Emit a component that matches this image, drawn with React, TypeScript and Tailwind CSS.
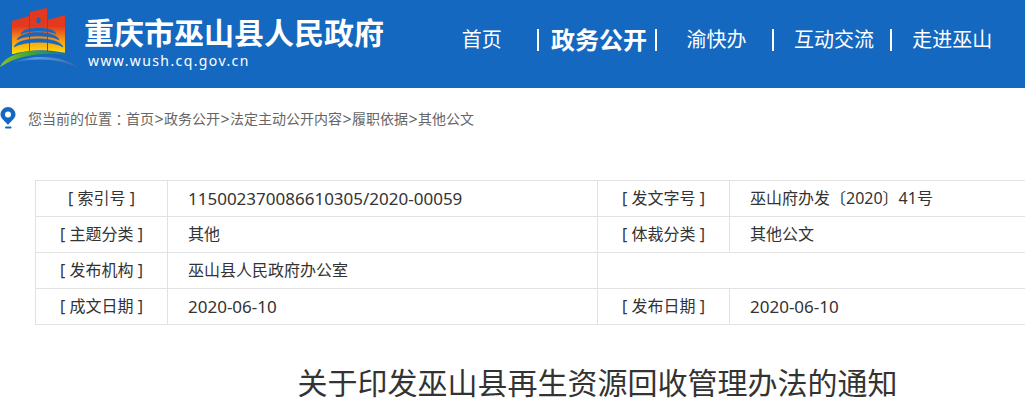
import React from 'react'

type NavItem = {
    label: string;
    active?: boolean;
}

const navItems: NavItem[] = [
    { label: '首页' },
    { label: '政务公开', active: true },
    { label: '渝快办' },
    { label: '互动交流' },
    { label: '走进巫山' },
]

const crumbs = ['首页', '政务公开', '法定主动公开内容', '履职依据', '其他公文']

// each row holds up to two label / value pairs
const rows: [string, string][][] = [
    [['索引号', '115002370086610305/2020-00059'], ['发文字号', '巫山府办发〔2020〕41号']],
    [['主题分类', '其他'], ['体裁分类', '其他公文']],
    [['发布机构', '巫山县人民政府办公室']],
    [['成文日期', '2020-06-10'], ['发布日期', '2020-06-10']],
]

// codes and dates are set slightly larger than the Chinese text
const isNumeric = (value: string) => /^[\d/-]+$/.test(value)

const Logo = () => (
    <svg className="w-20 h-[88px] shrink-0" viewBox="0 0 80 88" aria-hidden="true">
        <defs>
            <linearGradient id="tower" x1="0" y1="8" x2="0" y2="54" gradientUnits="userSpaceOnUse">
                <stop offset="0" stopColor="#e2371f" />
                <stop offset="0.4" stopColor="#e33a1e" />
                <stop offset="0.7" stopColor="#f59a1b" />
                <stop offset="1" stopColor="#ffe100" />
            </linearGradient>
            <linearGradient id="hill" x1="0" y1="0" x2="1" y2="0">
                <stop offset="0" stopColor="#8cc21f" />
                <stop offset="0.45" stopColor="#3fa535" />
                <stop offset="1" stopColor="#1d7a8c" />
            </linearGradient>
            <linearGradient id="river" x1="0" y1="0" x2="1" y2="0">
                <stop offset="0" stopColor="#1568c0" />
                <stop offset="0.35" stopColor="#5a9fdc" />
                <stop offset="1" stopColor="#3d66a8" />
            </linearGradient>
        </defs>
        <path fill="url(#tower)" d="M12 21 29 16V54H12ZM30 12 47 8V54H30ZM48 20 65 15V54H48Z" />
        <ellipse cx="38.5" cy="20.5" rx="2.2" ry="3" fill="#1568c0" />
        <path d="M29.500 14V54M47.500 14V54" stroke="#1568c0" strokeWidth="1" />
        <g fill="#1568c0" stroke="#1568c0" strokeWidth="0.6" strokeLinejoin="round">
            <path d="M21 34C23 26 54 26 56 34C50 30 27 30 21 34Z" />
            <path d="M17 40C20 30 56 30 59 40C51 34.500 25 34.500 17 40Z" />
            <path d="M14 47C18 36 59 36 63 47C54 40.500 24 40.500 14 47Z" />
        </g>
        <path fill="#1568c0" d="M10 55C30 49 50 49 68 54V57H10Z" />
        <path fill="url(#hill)" d="M0 67C4 57 20 51 36 51C49 51 59 52 66 55C46 52 20 54 0 67Z" />
        <path fill="url(#river)" d="M12 63C34 53 66 56 78 68C62 59 36 57 12 63Z" />
    </svg>
)

const PinIcon = () => (
    <svg className="w-4 h-6 shrink-0" viewBox="0 0 16 24" aria-hidden="true">
        <path fill="#1568c0" fillRule="evenodd" d="M8 0a7.500 7.500 0 0 1 7.500 7.500c0 4-4.500 6.500-7.500 10.500C5 14 .5 11.500.5 7.500A7.500 7.500 0 0 1 8 0Zm0 4.500a3 3 0 1 0 0 6 3 3 0 0 0 0-6Z" />
        <path d="M6 20.500h4.500" stroke="#1568c0" strokeWidth="2" strokeLinecap="round" />
    </svg>
)

const Header = () => (
    <header className="flex items-center h-[88px] pr-4 text-white bg-[#1568c0]">
        <a href="#" className="flex items-center shrink-0">
            <Logo />
            <div className="pb-0.5 pl-1 w-[342px]">
                <div className="text-[30px] leading-[36px] font-bold">重庆市巫山县人民政府</div>
                <div className="pl-1 text-sm leading-5 tracking-widest">www.wush.cq.gov.cn</div>
            </div>
        </a>
        <nav className="flex-1 pb-2">
            <ul className="flex">
                {navItems.map(({ label, active }, index) => (
                    <li key={label} className="flex items-center flex-1 h-9">
                        <a
                            href="#"
                            className={active
                                ? "flex-1 pl-1 text-2xl font-bold text-center whitespace-nowrap"
                                : "flex-1 pl-1 text-xl text-center whitespace-nowrap"}
                        >
                            {label}
                        </a>
                        {index < navItems.length - 1 && <span className="w-[2px] h-[22px] bg-white" />}
                    </li>
                ))}
            </ul>
        </nav>
    </header>
)

const Breadcrumb = () => (
    <nav className="flex items-center h-[62px] text-sm text-[#666]">
        <PinIcon />
        <p className="flex items-center pl-3">
            <span>您当前的位置</span>
            <span className="font-['Noto_Sans_CJK_TC',sans-serif]">：</span>
            {crumbs.map((crumb, index) => (
                <React.Fragment key={crumb}>
                    {index > 0 && <span className="w-[10px] text-base leading-5 text-center">&gt;</span>}
                    <a href="#">{crumb}</a>
                </React.Fragment>
            ))}
        </p>
    </nav>
)

const InfoTable = () => (
    <table className="w-full text-base leading-[35px] text-[#333] border-collapse table-fixed">
        <colgroup>
            <col className="w-[132px]" />
            <col />
            <col className="w-[132px]" />
            <col />
        </colgroup>
        <tbody>
            {rows.map((pairs) => (
                <tr key={pairs[0][0]}>
                    {pairs.map(([label, value]) => (
                        <React.Fragment key={label}>
                            <th scope="row" className="font-normal text-center border border-[#e2e2e2]">[ {label} ]</th>
                            <td
                                className={isNumeric(value)
                                    ? "pl-5 text-[17px] leading-[35px] border border-[#e2e2e2]"
                                    : "pl-5 border border-[#e2e2e2]"}
                            >
                                {value}
                            </td>
                        </React.Fragment>
                    ))}
                    {pairs.length === 1 && <td colSpan={2} className="border border-[#e2e2e2]" />}
                </tr>
            ))}
        </tbody>
    </table>
)

const App = () => {
    return (
        <div className="overflow-hidden bg-white font-['Noto_Sans','Noto_Sans_CJK_SC',sans-serif]">
            <Header />
            <Breadcrumb />
            {/* the article keeps its full column width and is cut off by narrow windows */}
            <main className="min-w-[1195px] px-[35px] pt-[30px] pb-3">
                <InfoTable />
                <h1 className="pt-9 text-3xl leading-[44px] text-center text-[#333]">
                    关于印发巫山县再生资源回收管理办法的通知
                </h1>
            </main>
        </div>
    );
}

export default App
